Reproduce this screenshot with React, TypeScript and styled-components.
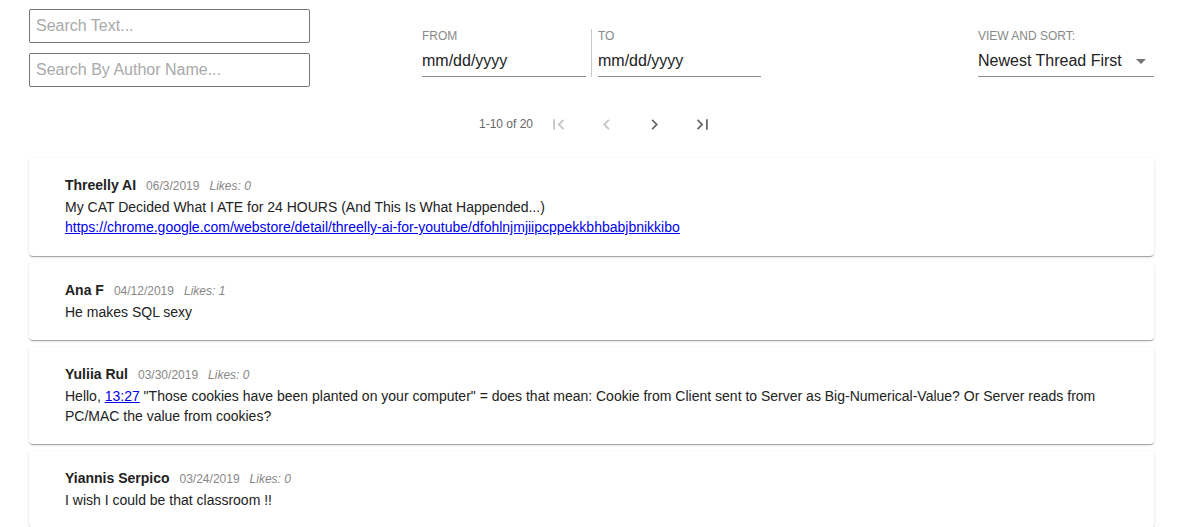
import React from "react";
import styled, { createGlobalStyle } from "styled-components";

const Global = createGlobalStyle`
  html, body { margin: 0; padding: 0; background: #fff; }
  body { font-family: "Liberation Sans", Arial, sans-serif; color: #222; }
  * { box-sizing: border-box; }
`;

const Page = styled.div`
  width: 1125px;
  margin-left: 29px;
  padding-top: 9px;
`;

const Header = styled.div`
  display: flex;
  align-items: flex-start;
`;

const SearchColumn = styled.div`
  display: flex;
  flex-direction: column;
  gap: 10px;
  width: 281px;
`;

const SearchInput = styled.input`
  width: 281px;
  height: 34px;
  border: 1px solid #767676;
  border-radius: 2px;
  padding: 0 6px;
  font-family: "Liberation Sans", Arial, sans-serif;
  font-size: 16px;
  color: #222;
  outline: none;
  &::placeholder { color: #a9a9a9; }
`;

const DateGroup = styled.div`
  display: flex;
  align-items: stretch;
  margin-left: 112px;
  margin-top: 20px;
`;

const Divider = styled.div`
  width: 1px;
  background: #c8c8c8;
  margin: 0 6px 0 5px;
`;

const Field = styled.div<{ $w: number }>`
  display: flex;
  flex-direction: column;
  width: ${(p) => p.$w}px;
`;

const FieldLabel = styled.div`
  font-size: 12px;
  line-height: 12px;
  color: #888;
  text-transform: uppercase;
  margin-top: 1px;
`;

const FieldValue = styled.div`
  display: flex;
  align-items: center;
  justify-content: space-between;
  font-size: 16px;
  line-height: 20px;
  color: #222;
  padding: 9px 0 5px;
  border-bottom: 1px solid #8c8c8c;
`;

const SortGroup = styled.div`
  margin-left: auto;
  margin-top: 20px;
`;

const Arrow = styled.span`
  width: 0;
  height: 0;
  border-left: 5px solid transparent;
  border-right: 5px solid transparent;
  border-top: 5px solid #757575;
  margin-right: 8px;
`;

const PagerRow = styled.div`
  display: flex;
  align-items: center;
  justify-content: center;
  padding-left: 22px;
  margin-top: 13px;
  height: 48px;
`;

const PagerText = styled.span`
  font-size: 12px;
  color: #666;
  margin-right: 1px;
`;

const IconButton = styled.button<{ $disabled?: boolean }>`
  width: 48px;
  height: 48px;
  border: none;
  background: none;
  padding: 0;
  display: flex;
  align-items: center;
  justify-content: center;
  color: ${(p) => (p.$disabled ? "#c2c2c2" : "#666")};
  cursor: ${(p) => (p.$disabled ? "default" : "pointer")};
`;

const List = styled.div`
  display: flex;
  flex-direction: column;
  gap: 7px;
  margin-top: 10px;
`;

const Card = styled.div`
  background: #fff;
  border-radius: 4px;
  box-shadow: 0px 2px 1px -1px rgba(0, 0, 0, 0.2), 0px 1px 1px 0px rgba(0, 0, 0, 0.14),
    0px 1px 3px 0px rgba(0, 0, 0, 0.12);
  padding: 17px 36px 18px;
`;

const Meta = styled.div`
  display: flex;
  align-items: baseline;
  gap: 10px;
  height: 20px;
  line-height: 20px;
  margin-bottom: 2px;
`;

const Author = styled.span`
  font-size: 14px;
  font-weight: bold;
  color: #222;
`;

const DateText = styled.span`
  font-size: 12px;
  color: #888;
`;

const Likes = styled.span`
  font-size: 12px;
  color: #888;
  font-style: italic;
`;

const Body = styled.div`
  font-size: 14px;
  line-height: 20px;
  color: #222;
`;

const Link = styled.a`
  color: #0000ee;
  text-decoration: underline;
`;

const LinkLine = styled.div`
  padding-bottom: 1px;
`;

const Icon = ({ d }: { d: string }) => (
  <svg width="21" height="21" viewBox="0 0 24 24" fill="currentColor">
    <path d={d} />
  </svg>
);

const comments = [
  {
    author: "Threelly AI",
    date: "06/3/2019",
    likes: 0,
    body: (
      <>
        My CAT Decided What I ATE for 24 HOURS (And This Is What Happended...)
        <LinkLine>
          <Link href="#">https://chrome.google.com/webstore/detail/threelly-ai-for-youtube/dfohlnjmjiipcppekkbhbabjbnikkibo</Link>
        </LinkLine>
      </>
    ),
  },
  { author: "Ana F", date: "04/12/2019", likes: 1, body: <>He makes SQL sexy</> },
  {
    author: "Yuliia Rul",
    date: "03/30/2019",
    likes: 0,
    body: (
      <>
        Hello, <Link href="#">13:27</Link> "Those cookies have been planted on your computer" = does that mean: Cookie
        from Client sent to Server as Big-Numerical-Value? Or Server reads from PC/MAC the value from cookies?
      </>
    ),
  },
  { author: "Yiannis Serpico", date: "03/24/2019", likes: 0, body: <>I wish I could be that classroom !!</> },
];

export default function App() {
  return (
    <>
      <Global />
      <Page>
        <Header>
          <SearchColumn>
            <SearchInput placeholder="Search Text..." />
            <SearchInput placeholder="Search By Author Name..." />
          </SearchColumn>
          <DateGroup>
            <Field $w={164}>
              <FieldLabel>From</FieldLabel>
              <FieldValue>mm/dd/yyyy</FieldValue>
            </Field>
            <Divider />
            <Field $w={163}>
              <FieldLabel>To</FieldLabel>
              <FieldValue>mm/dd/yyyy</FieldValue>
            </Field>
          </DateGroup>
          <SortGroup>
            <Field $w={176}>
              <FieldLabel>View and sort:</FieldLabel>
              <FieldValue>
                Newest Thread First
                <Arrow />
              </FieldValue>
            </Field>
          </SortGroup>
        </Header>
        <PagerRow>
          <PagerText>1-10 of 20</PagerText>
          <IconButton $disabled>
            <Icon d="M18.41 16.59L13.82 12l4.59-4.59L17 6l-6 6 6 6zM6 6h2v12H6z" />
          </IconButton>
          <IconButton $disabled>
            <Icon d="M15.41 7.41L14 6l-6 6 6 6 1.41-1.41L10.83 12z" />
          </IconButton>
          <IconButton>
            <Icon d="M10 6L8.59 7.41 13.17 12l-4.58 4.59L10 18l6-6z" />
          </IconButton>
          <IconButton>
            <Icon d="M5.59 7.41L10.18 12l-4.59 4.59L7 18l6-6-6-6zM16 6h2v12h-2z" />
          </IconButton>
        </PagerRow>
        <List>
          {comments.map((c) => (
            <Card key={c.author}>
              <Meta>
                <Author>{c.author}</Author>
                <DateText>{c.date}</DateText>
                <Likes>Likes: {c.likes}</Likes>
              </Meta>
              <Body>{c.body}</Body>
            </Card>
          ))}
        </List>
      </Page>
    </>
  );
}
